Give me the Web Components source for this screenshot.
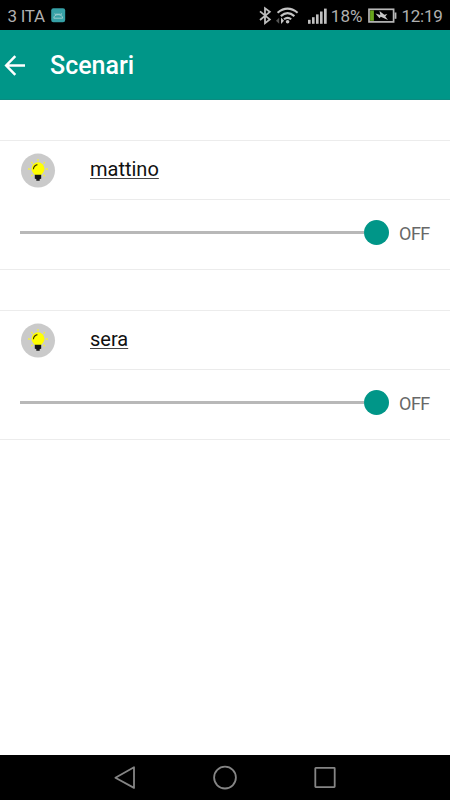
<!DOCTYPE html>
<html lang="it">
<head>
<meta charset="utf-8">
<title>Scenari</title>
<style>
html, body { margin: 0; height: 100%; background: #fff; }
body { font-family: Roboto, "Liberation Sans", sans-serif; overflow: hidden; }
</style>
</head>
<body>
<scenari-app></scenari-app>
<script>
function define(name, html) {
  const template = document.createElement('template');
  template.innerHTML = html;
  customElements.define(name, class extends HTMLElement {
    constructor() {
      super();
      this.attachShadow({ mode: 'open' }).append(template.content.cloneNode(true));
    }
  });
}

define('status-bar', `
<style>
:host { display: flex; align-items: center; box-sizing: border-box; height: 30px; padding: 1px 7.5px 0 7.5px; background: #000; color: #b0b0b0; font-size: 17px; line-height: 30px; white-space: nowrap; }
svg { display: block; flex: none; }
.carrier { letter-spacing: -0.3px; }
.app { margin-left: 6.5px; }
.bt { margin-left: auto; }
.wifi { margin-left: 4px; }
.cell { margin-left: 8px; }
.pct { margin-left: 4px; }
.bat { margin-left: 5.5px; }
.time { margin-left: 4.5px; letter-spacing: -0.25px; }
</style>
<span class="carrier">3 ITA</span>
<svg class="app" width="15" height="28" viewBox="0 0 15 28">
  <rect x="0.2" y="6.3" width="14" height="14" rx="2.2" fill="#36a0a6"/>
  <path d="M2.8 16.2C3 14 4.2 12.7 7.2 12.7s4.2 1.3 4.4 3.5ZM4.6 13.2 3.8 11.4M9.8 13.2l.8-1.8M5 12.2h4.4" fill="none" stroke="#a6d0d2" stroke-width=".9"/>
</svg>
<svg class="bt" width="14" height="28" viewBox="0 0 14 28">
  <path d="M2 9.4 11.8 17.4 7 21.1V6.3L11.8 9.9 2 18" fill="none" stroke="#bdbdbd" stroke-width="1.8"/>
</svg>
<svg class="wifi" width="24" height="28" viewBox="0 0 24 28">
  <g fill="none" stroke="#c4c4c4" stroke-width="2.1">
    <path d="M1.6 10.7Q11.5 2.7 21.6 10.7"/><path d="M4.8 14.1Q11.6 8.3 18.4 14.1"/><path d="M8 17.3Q11.6 14.4 15.2 17.3"/>
  </g>
  <circle cx="11.6" cy="19.8" r="1.8" fill="#c4c4c4"/>
  <path d="M0 18.8 3.2 15.8V21.8Z" fill="#555"/><path d="M8 18.8 5 15.6V22Z" fill="#c4c4c4"/>
</svg>
<svg class="cell" width="19" height="28" viewBox="0 0 19 28" fill="#c0c0c0">
  <rect x="0" y="17.8" width="2.6" height="4"/><rect x="4" y="15.2" width="2.6" height="6.6"/><rect x="8" y="12.4" width="2.6" height="9.4"/><rect x="12" y="9.5" width="2.6" height="12.3"/><rect x="16" y="6.6" width="2.7" height="15.2"/>
</svg>
<span class="pct">18%</span>
<svg class="bat" width="29" height="28" viewBox="0 0 29 28">
  <rect x="1" y="7.3" width="24.6" height="12.6" fill="#000" stroke="#b8b8b8" stroke-width="1.7"/>
  <rect x="26.6" y="10.5" width="1.8" height="6.3" fill="#b8b8b8"/>
  <rect x="2.1" y="8.4" width="3.8" height="10.4" fill="#68a51c"/>
  <path d="M11.5 9 16.3 12.8 19.3 12 17.3 14.5 20 18 12.8 14.7 11.5 16.3 7.5 11.4 12.3 13Z" fill="#c8c8c8"/>
</svg>
<span class="time">12:19</span>
`);

define('app-header', `
<style>
:host { display: flex; align-items: center; box-sizing: border-box; height: 70px; padding-left: 4px; background: #009688; color: #fff; border-bottom: 1px solid #0b8b80; }
svg { display: block; margin-right: 24px; }
h1 { margin: 0; padding-top: 2px; font-size: 25px; font-weight: 500; line-height: 68px; }
</style>
<svg width="22" height="24" viewBox="0 0 22 24"><path d="M21 12.5H2.7M11.3 3.2 2.2 12.5 11.3 21.8" fill="none" stroke="#fff" stroke-width="2.5"/></svg>
<h1><slot></slot></h1>
`);

define('bulb-icon', `
<style>:host, svg { display: block; } svg { overflow: visible; }</style>
<svg width="34" height="34" viewBox="0 0 34 34">
  <circle cx="17" cy="16.6" r="17" fill="#cacaca"/>
  <path d="M17 5V7.3M10.3 8 11.7 9.7M23.9 8 22.5 9.7M7 15H9.2M24.7 15H27M10.2 22.2 11.7 20.8M24 22.2 22.5 20.8" stroke="#f2ee45" stroke-width="1.3"/>
  <path d="M17 8.3a6.5 6.5 0 0 0-6.5 6.5c0 2.6 1.4 4.1 3.4 6.1h6.2c2-2 3.4-3.5 3.4-6.1A6.5 6.5 0 0 0 17 8.3Z" fill="#ff0"/>
  <path d="M12.4 15.2Q12.7 11.4 16.4 10.6" fill="none" stroke="#333000" stroke-width="1.1"/>
  <path d="M13.8 20.8H20.2V24.7L18.7 25V26.7H15.3V25L13.8 24.7Z" fill="#151515"/>
</svg>
`);

define('level-slider', `
<style>
:host { display: flex; align-items: center; flex: 1; height: 26px; }
.track { flex: 1; height: 3px; background: #b8b8b8; }
.knob { width: 25px; height: 25px; border-radius: 50%; background: #009688; }
</style>
<div class="track"></div><div class="knob"></div>
`);

define('scenario-card', `
<style>
:host { display: block; box-sizing: border-box; height: 130px; border-top: 1px solid #ececec; border-bottom: 1px solid #ececec; background: #fff; }
.head { display: flex; height: 59px; }
bulb-icon { margin: 13px 35px 0 21px; }
.name { flex: 1; box-sizing: border-box; border-bottom: 1px solid #ebebeb; font-size: 20px; line-height: 56px; color: #111; }
.name span { text-decoration: underline; text-decoration-color: #444; text-decoration-thickness: 1px; text-decoration-skip-ink: none; text-underline-offset: 2px; }
.control { display: flex; align-items: center; padding: 0 20px; height: 65px; }
.state { width: 31px; margin-left: 10px; padding-top: 3px; font-size: 18px; letter-spacing: -0.5px; line-height: 26px; color: #686868; }
</style>
<div class="head"><bulb-icon></bulb-icon><div class="name"><span><slot></slot></span></div></div>
<div class="control"><level-slider></level-slider><span class="state"><slot name="state"></slot></span></div>
`);

define('nav-bar', `
<style>
:host { display: flex; justify-content: center; align-items: center; gap: 76px; height: 45px; background: #000; }
svg { display: block; fill: none; stroke: #858585; stroke-width: 1.8; stroke-linejoin: round; }
</style>
<svg width="24" height="26" viewBox="0 0 24 26"><path d="M2.4 12.7 21 2.3V22.9Z"/></svg>
<svg width="24" height="26" viewBox="0 0 24 26"><circle cx="12" cy="12.6" r="10.9"/></svg>
<svg width="24" height="26" viewBox="0 0 24 26"><rect x="2.3" y="2.9" width="19.4" height="19.2" rx=".5"/></svg>
`);

define('scenari-app', `
<style>
:host { display: flex; flex-direction: column; width: 450px; height: 800px; background: #fff; }
main { flex: 1; display: flex; flex-direction: column; gap: 40px; padding-top: 40px; }
</style>
<status-bar></status-bar>
<app-header>Scenari</app-header>
<main>
  <scenario-card>mattino<span slot="state">OFF</span></scenario-card>
  <scenario-card>sera<span slot="state">OFF</span></scenario-card>
</main>
<nav-bar></nav-bar>
`);
</script>
</body>
</html>
